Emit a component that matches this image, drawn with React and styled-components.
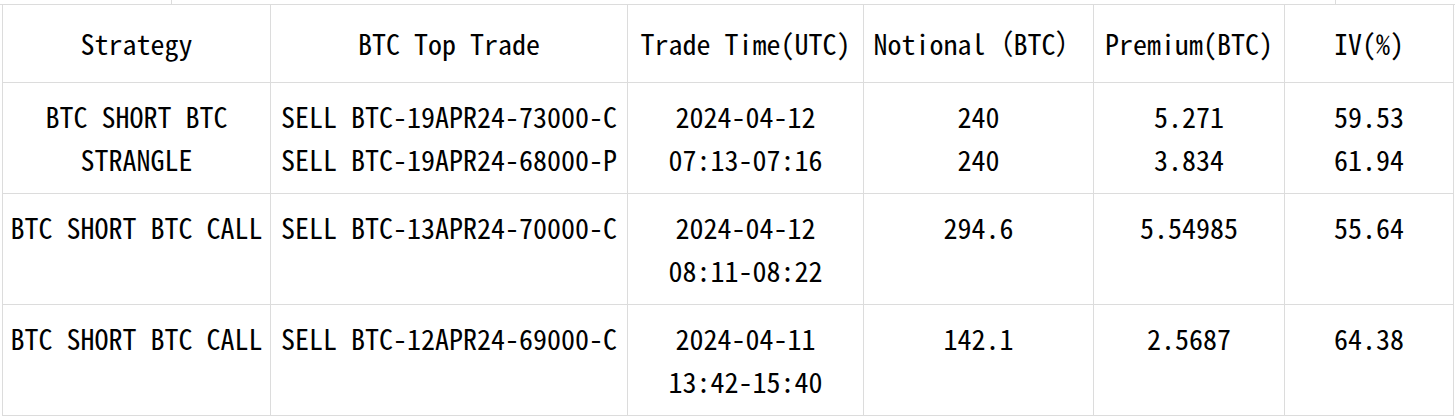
import styled, { createGlobalStyle } from "styled-components";

const GlobalStyle = createGlobalStyle`
  body {
    margin: 0;
    background: #fff;
  }
`;

const trades = [
  {
    strategy: "BTC SHORT BTC STRANGLE",
    legs: ["SELL BTC-19APR24-73000-C", "SELL BTC-19APR24-68000-P"],
    time: ["2024-04-12", "07:13-07:16"],
    notional: ["240", "240"],
    premium: ["5.271", "3.834"],
    iv: ["59.53", "61.94"],
  },
  {
    strategy: "BTC SHORT BTC CALL",
    legs: ["SELL BTC-13APR24-70000-C"],
    time: ["2024-04-12", "08:11-08:22"],
    notional: ["294.6"],
    premium: ["5.54985"],
    iv: ["55.64"],
  },
  {
    strategy: "BTC SHORT BTC CALL",
    legs: ["SELL BTC-12APR24-69000-C"],
    time: ["2024-04-11", "13:42-15:40"],
    notional: ["142.1"],
    premium: ["2.5687"],
    iv: ["64.38"],
  },
];

const columns = [
  { title: "Strategy", width: 268 },
  { title: "BTC Top Trade", width: 357 },
  { title: "Trade Time(UTC)", width: 236 },
  { title: "Notional（BTC）", width: 230 },
  { title: "Premium(BTC)", width: 191 },
  { title: "IV(%)", width: 169 },
];

const App = () => {
  return (
    <Page>
      <GlobalStyle />
      <PrevTableEdge>
        <EdgeCell $width={172} />
        <EdgeCell $width={1164} />
        <EdgeCell $width={119} $last />
      </PrevTableEdge>
      <Table>
        <colgroup>
          {columns.map((c) => (
            <col key={c.title} style={{ width: c.width }} />
          ))}
        </colgroup>
        <thead>
          <HeadRow>
            {columns.map((c) => (
              <HeadCell key={c.title}>{c.title}</HeadCell>
            ))}
          </HeadRow>
        </thead>
        <tbody>
          {trades.map((t, i) => (
            <BodyRow key={i}>
              <Cell>{t.strategy}</Cell>
              <Cell>
                {t.legs.map((l) => (
                  <Line key={l}>{l}</Line>
                ))}
              </Cell>
              <Cell>
                {t.time.map((l) => (
                  <Line key={l}>{l}</Line>
                ))}
              </Cell>
              <Cell>
                {t.notional.map((l, j) => (
                  <Line key={j}>{l}</Line>
                ))}
              </Cell>
              <Cell>
                {t.premium.map((l) => (
                  <Line key={l}>{l}</Line>
                ))}
              </Cell>
              <Cell>
                {t.iv.map((l) => (
                  <Line key={l}>{l}</Line>
                ))}
              </Cell>
            </BodyRow>
          ))}
        </tbody>
      </Table>
    </Page>
  );
};

const Page = styled.div`
  width: 1455px;
  font-family: "Noto Sans Mono CJK SC", "Liberation Mono", monospace;
  color: #000;
`;

const PrevTableEdge = styled.div`
  display: flex;
  height: 4px;
  border-bottom: 1px solid #dcdcdc;
`;

const EdgeCell = styled.div`
  width: ${(p) => p.$width}px;
  border-right: ${(p) => (p.$last ? "none" : "1px solid #dcdcdc")};
  box-sizing: border-box;
`;

const Table = styled.table`
  margin-left: 2px;
  width: 1451px;
  border-collapse: collapse;
  table-layout: fixed;
  font-size: 28px;
  line-height: 43px;
`;

const HeadRow = styled.tr`
  height: 77px;
`;

const HeadCell = styled.th`
  font-weight: normal;
  text-align: center;
  vertical-align: middle;
  padding: 0 4px;
  border: 1px solid #dcdcdc;
  border-top: none;
  white-space: nowrap;
`;

const BodyRow = styled.tr`
  height: 111px;
`;

const Cell = styled.td`
  text-align: center;
  vertical-align: top;
  padding: 12px 4px 0;
  border: 1px solid #dcdcdc;
`;

const Line = styled.div`
  white-space: nowrap;
`;

export default App;
